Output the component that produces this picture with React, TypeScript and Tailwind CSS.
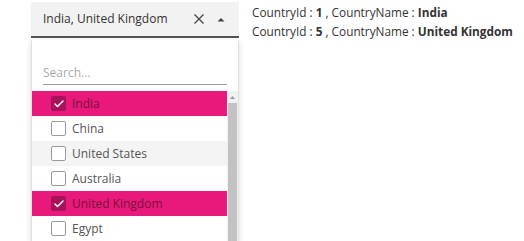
import { Check } from "lucide-react";

const items = [
  { id: 1, name: "India", checked: true },
  { id: 2, name: "China" },
  { id: 3, name: "United States", hover: true },
  { id: 4, name: "Australia" },
  { id: 5, name: "United Kingdom", checked: true },
  { id: 6, name: "Egypt" },
];

export default function App() {
  return (
    <div
      className="flex h-[241px] w-[524px] overflow-hidden bg-white pl-[31px] text-[#333]"
      style={{ fontFamily: '"Open Sans", "Noto Sans", sans-serif' }}
    >
      <div className="flex w-[208px] flex-col">
        {/* input */}
        <div className="mt-[2px] flex h-[37px] items-center border-b-2 border-[#555] bg-[#f2f2f2] pl-[12px] pr-[14px]">
          <span className="flex-1 text-[12px] text-[#333]">India, United Kingdom</span>
          <svg width="12" height="12" viewBox="0 0 12 12" className="mr-[12px]">
            <path d="M1.5 1.5 L10.5 10.5 M10.5 1.5 L1.5 10.5" stroke="#444" strokeWidth="1.3" />
          </svg>
          <svg width="8" height="5" viewBox="0 0 8 5">
            <path d="M0.5 4.5 L4 1 L7.5 4.5 Z" fill="#444" />
          </svg>
        </div>
        {/* popup */}
        <div className="mt-[2px] flex flex-1 flex-col border-x border-[#e0e0e0] bg-white shadow-[0_2px_6px_rgba(0,0,0,0.15)]">
          <div className="px-[11px] pt-[24px] pb-[6px]">
            <div className="border-b border-[#9e9e9e] pb-[2px] text-[12px] text-[#aaa]">Search...</div>
          </div>
          <div className="flex flex-1">
            <ul className="flex-1">
              {items.map((it) => (
                <li
                  key={it.id}
                  className={
                    "flex h-[25px] items-center pl-[19px] text-[12px] " +
                    (it.checked
                      ? "bg-[#e8197a] text-[#7a1040]"
                      : it.hover
                      ? "bg-[#f4f4f4] text-[#555]"
                      : "text-[#555]")
                  }
                >
                  {it.checked ? (
                    <span className="mr-[6px] flex h-[15px] w-[15px] items-center justify-center rounded-[2px] bg-[#a8125a]">
                      <Check size={12} strokeWidth={3} color="#fff" />
                    </span>
                  ) : (
                    <span className="mr-[6px] h-[15px] w-[15px] rounded-[2px] border border-[#9a9a9a] bg-white" />
                  )}
                  {it.name}
                </li>
              ))}
            </ul>
            <div className="flex w-[11px] flex-col bg-[#f0f0f0]">
              <div className="flex h-[12px] items-center justify-center">
                <svg width="5" height="3" viewBox="0 0 5 3">
                  <path d="M0 3 L2.5 0 L5 3 Z" fill="#999" />
                </svg>
              </div>
              <div className="mx-[1px] flex-1 bg-[#c2c2c2]" />
            </div>
          </div>
        </div>
      </div>
      <div className="ml-[13px] pt-[3px] text-[11.8px] leading-[19px] text-[#333]">
        <div>
          CountryId : <b>1</b> , CountryName : <b>India</b>
        </div>
        <div>
          CountryId : <b>5</b> , CountryName : <b>United Kingdom</b>
        </div>
      </div>
    </div>
  );
}
